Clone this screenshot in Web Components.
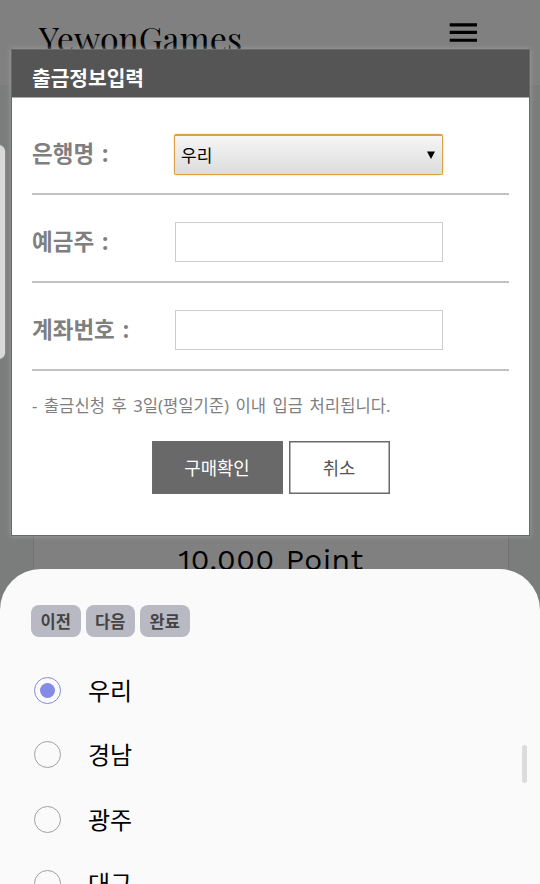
<!DOCTYPE html>
<html lang="ko">
<head>
<meta charset="utf-8">
<title>YewonGames</title>
<style>
html, body {
  margin: 0;
  height: 100%;
  overflow: hidden;
}
body {
  font-family: "Noto Sans CJK KR", "Noto Sans", sans-serif;
  background: #7b7d7c;
}
</style>
</head>
<body>

<yg-app>
  <yg-page slot="page" brand="YewonGames">10.000 Point</yg-page>
  <yg-dialog slot="dialog" heading="출금정보입력">
    <yg-field label="은행명 :"><yg-select>우리</yg-select></yg-field>
    <yg-field label="예금주 :"><yg-input></yg-input></yg-field>
    <yg-field label="계좌번호 :"><yg-input></yg-input></yg-field>
    <span slot="note">- 출금신청 후 3일(평일기준) 이내 입금 처리됩니다.</span>
    <yg-button slot="actions" primary>구매확인</yg-button>
    <yg-button slot="actions">취소</yg-button>
  </yg-dialog>
  <yg-sheet slot="sheet">
    <yg-chip slot="nav">이전</yg-chip>
    <yg-chip slot="nav">다음</yg-chip>
    <yg-chip slot="nav">완료</yg-chip>
    <yg-option checked>우리</yg-option>
    <yg-option>경남</yg-option>
    <yg-option>광주</yg-option>
    <yg-option>대구</yg-option>
  </yg-sheet>
</yg-app>

<script>
/**
 * Registers an element whose shadow root is filled from the passed markup. Attributes named in
 * `texts` are written to the node with the same id.
 */
function define(name, html, texts = []) {
  const template = document.createElement('template');
  template.innerHTML = html;

  customElements.define(name, class extends HTMLElement {
    constructor() {
      super();
      const root = this.attachShadow({mode: 'open'});
      root.appendChild(template.content.cloneNode(true));
      texts.forEach(key => {
        root.getElementById(key).textContent = this.getAttribute(key) || '';
      });
    }
  });
}

// Stacks the page, the dialog and the picker sheet.
define('yg-app', `
<style>
:host {
  display: block;
  position: relative;
  width: 540px;
  height: 884px;
  overflow: hidden;
}
.handle {
  position: absolute;
  left: -8px;
  top: 145px;
  width: 13px;
  height: 214px;
  border-radius: 7px;
  background: #d9d9d9;
  box-shadow: 0 0 2px #bbb;
}
::slotted([slot="dialog"]) {
  position: absolute;
  left: 11px;
  top: 49px;
}
::slotted([slot="sheet"]) {
  position: absolute;
  left: 0;
  top: 569px;
}
</style>
<slot name="page"></slot>
<slot name="dialog"></slot>
<div class="handle"></div>
<slot name="sheet"></slot>
`);

define('yg-page', `
<style>
:host {
  display: flex;
  flex-direction: column;
  height: 884px;
  color: #000;
}
header {
  display: flex;
  justify-content: space-between;
  box-sizing: border-box;
  height: 85px;
  padding: 17px 61px 0 39px;
  background: #808080;
}
#brand {
  font: 34px/42px "Playfair Display", "Liberation Serif", serif;
  letter-spacing: 0.05px;
}
svg {
  display: block;
  margin-top: 4px;
}
.card {
  flex: 1;
  display: flex;
  justify-content: center;
  margin: 0 31px 0 33px;
  padding-top: 453px;
  background: #808080;
  border: 1px solid #737373;
  border-width: 0 1px;
  font: 30px/44px "Work Sans", Inter, sans-serif;
  letter-spacing: 0.6px;
}
</style>
<header>
  <div id="brand"></div>
  <svg width="32" height="24" viewBox="0 0 32 24">
    <path d="M2.7 3.9H30M2.7 11.4H30M2.7 19.3H30" stroke="#000" stroke-width="3.1"/>
  </svg>
</header>
<div class="card"><div><slot></slot></div></div>
`, ['brand']);

define('yg-dialog', `
<style>
:host {
  display: flex;
  flex-direction: column;
  box-sizing: border-box;
  width: 519px;
  height: 487px;
  background: #fff;
  border: 1px solid #686a69;
  box-shadow: 0 0 5px #a0a0a0;
}
#heading {
  height: 48px;
  padding: 4px 20px 0;
  box-sizing: border-box;
  background: #555;
  border-bottom: 1px solid #aaa;
  color: #fff;
  font-size: 20.3px;
  line-height: 46px;
  font-weight: 700;
}
.body {
  padding: 9px 20px 0;
}
.note {
  margin-top: 23px;
  color: #7f7f7f;
  font-family: "Noto Sans", "Noto Sans CJK KR", sans-serif;
  font-size: 16.6px;
  line-height: 24px;
  word-spacing: 2.2px;
  white-space: nowrap;
}
.actions {
  display: flex;
  justify-content: center;
  gap: 6px;
  margin-top: 23px;
}
</style>
<div id="heading"></div>
<div class="body">
  <slot></slot>
  <div class="note"><slot name="note"></slot></div>
  <div class="actions"><slot name="actions"></slot></div>
</div>
`, ['heading']);

define('yg-field', `
<style>
:host {
  display: flex;
  align-items: center;
  box-sizing: border-box;
  height: 88px;
  padding-top: 7px;
  border-bottom: 2px solid #c2c2c2;
}
#label {
  width: 142px;
  color: #7f7f7f;
  font-family: "Noto Sans", "Noto Sans CJK KR", sans-serif;
  font-size: 22.5px;
  line-height: 32px;
  font-weight: 700;
  word-spacing: 2px;
}
</style>
<div id="label"></div>
<slot></slot>
`, ['label']);

define('yg-select', `
<style>
:host {
  display: flex;
  align-items: center;
  justify-content: space-between;
  box-sizing: border-box;
  width: 269px;
  height: 41px;
  margin-top: 2px;
  padding: 0 7px 0 6px;
  border: 1px solid #dca144;
  border-width: 2px 1px 1px;
  border-radius: 2px;
  background: linear-gradient(#f6f6f6, #dcdcdc);
  box-shadow: 0 0 2px #f6d070;
  color: #000;
  font-size: 17px;
  line-height: 24px;
}
</style>
<span><slot></slot></span>
<svg width="8" height="8" viewBox="0 0 8 8"><path d="M0 .5h8L4 8z"/></svg>
`);

define('yg-input', `
<style>
:host {
  display: block;
  box-sizing: border-box;
  width: 268px;
  height: 40px;
  margin-left: 1px;
  border: 1px solid #ccc;
  background: #fff;
}
</style>
`);

define('yg-button', `
<style>
:host {
  display: flex;
  align-items: center;
  justify-content: center;
  box-sizing: border-box;
  width: 101px;
  height: 53px;
  padding-bottom: 1px;
  border: 1px solid #6b6b6b;
  box-shadow: inset 0 0 0 0.5px #6b6b6b;
  color: #555;
  font-size: 17.8px;
  line-height: 26px;
}
:host([primary]) {
  width: 131px;
  background: #696969;
  color: #fff;
}
</style>
<slot></slot>
`);

define('yg-sheet', `
<style>
:host {
  display: block;
  box-sizing: border-box;
  width: 540px;
  height: 315px;
  padding: 36px 31px 0;
  border-radius: 41px 41px 0 0;
  background: #fafafa;
  overflow: hidden;
}
.nav {
  display: flex;
  gap: 5px;
  margin-bottom: 21px;
}
.scroll {
  position: absolute;
  right: 13px;
  top: 176px;
  width: 5px;
  height: 38px;
  border-radius: 3px;
  background: #dcdcdc;
}
</style>
<div class="nav"><slot name="nav"></slot></div>
<slot></slot>
<div class="scroll"></div>
`);

define('yg-chip', `
<style>
:host {
  display: flex;
  align-items: center;
  justify-content: center;
  width: 49.5px;
  height: 31.5px;
  border-radius: 8px;
  background: #b9b9c3;
  color: #444;
  font-size: 16.5px;
  line-height: 24px;
  font-weight: 700;
}
</style>
<slot></slot>
`);

define('yg-option', `
<style>
:host {
  display: flex;
  align-items: center;
  gap: 27px;
  height: 64.5px;
  padding-left: 3px;
  color: #000;
  font-size: 24px;
  line-height: 34px;
}
.radio {
  display: flex;
  align-items: center;
  justify-content: center;
  box-sizing: border-box;
  width: 27px;
  height: 27px;
  margin-top: 1px;
  border: 1px solid #a0a0a0;
  border-radius: 50%;
}
:host([checked]) .radio {
  border-color: #8488e0;
}
:host([checked]) .radio:before {
  content: "";
  width: 15px;
  height: 15px;
  border-radius: 50%;
  background: #858ae6;
}
</style>
<div class="radio"></div>
<span><slot></slot></span>
`);
</script>
</body>
</html>
